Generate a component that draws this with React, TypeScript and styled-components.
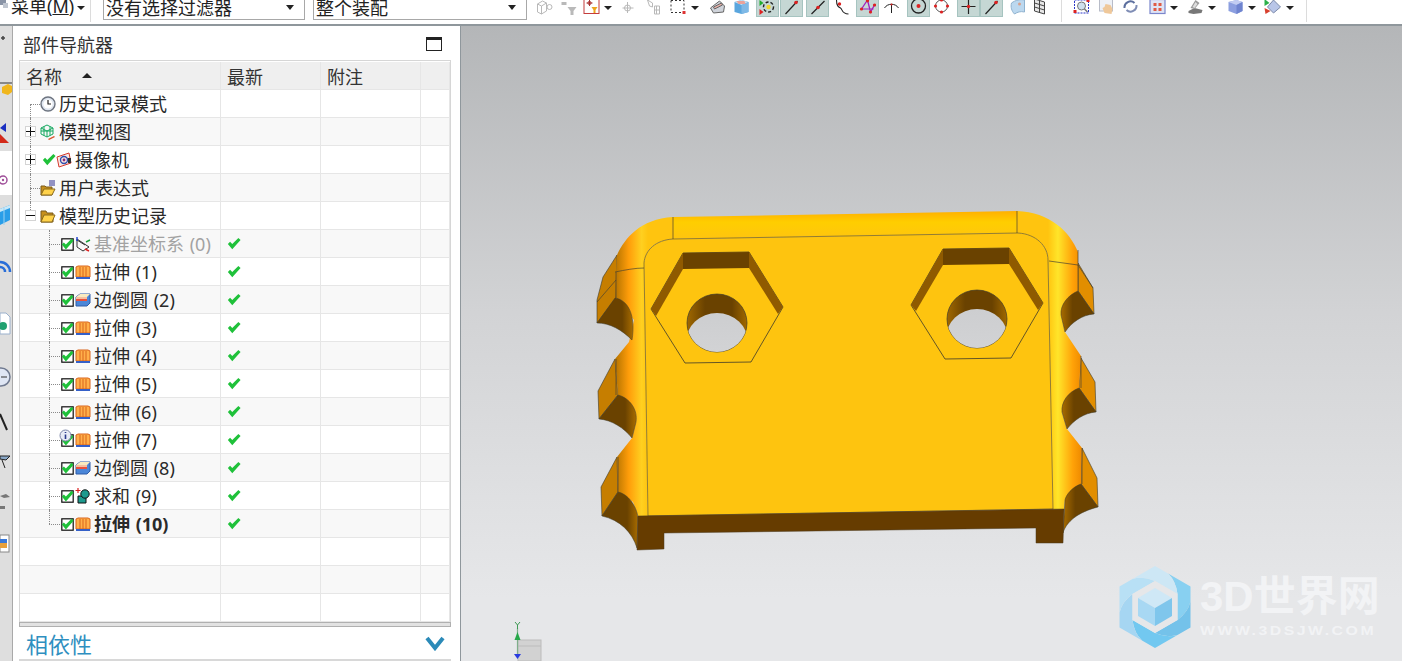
import React from 'react';
import styled, { createGlobalStyle } from 'styled-components';

const UI_FONT = '"Noto Sans", "Noto Sans CJK SC", sans-serif';

const GlobalStyle = createGlobalStyle`
  html, body {
    margin: 0;
    width: 1402px;
    height: 661px;
    overflow: hidden;
    background: #fff;
    font-family: ${UI_FONT};
  }
`;

const Page = styled.div`
  width: 1402px;
  height: 661px;
  display: flex;
  flex-direction: column;
  overflow: hidden;
`;

const Toolbar = styled.div`
  flex: 0 0 26px;
  box-sizing: border-box;
  display: flex;
  align-items: flex-start;
  overflow: hidden;
  background: #fff;
  border-bottom: 2px solid #8f979c;
`;

const MenuLabel = styled.span`
  margin: -5px 0 0 2px;
  font-size: 18px;
  line-height: 22px;
  color: #222;
  white-space: nowrap;
  width: 62px;
`;

const Caret = styled.i<{ $ml: number }>`
  flex: none;
  margin: 6px 0 0 ${(p) => p.$ml}px;
  border-left: 4px solid transparent;
  border-right: 4px solid transparent;
  border-top: 4px solid #222;
`;

const ToolSep = styled.i<{ $ml: number }>`
  flex: none;
  width: 1px;
  height: 22px;
  margin-left: ${(p) => p.$ml}px;
  background: #dcdcdc;
`;

const Combo = styled.div<{ $w: number; $ml: number }>`
  flex: none;
  box-sizing: border-box;
  width: ${(p) => p.$w}px;
  height: 20px;
  margin-left: ${(p) => p.$ml}px;
  padding: 0 10px 0 2px;
  display: flex;
  align-items: flex-end;
  justify-content: space-between;
  border: 1px solid #a8a8a8;
  border-top: 0;
  font-size: 18px;
  line-height: 21px;
  color: #222;
  white-space: nowrap;

  &::after {
    content: '';
    margin-bottom: 9px;
    border-left: 4px solid transparent;
    border-right: 4px solid transparent;
    border-top: 5px solid #222;
  }
`;

const Tool = styled.div<{ $w: number; $ml: number; $on?: boolean }>`
  flex: none;
  box-sizing: border-box;
  width: ${(p) => p.$w}px;
  height: 17px;
  margin-left: ${(p) => p.$ml}px;
  display: flex;
  align-items: flex-start;
  justify-content: center;
  background: ${(p) => (p.$on ? '#c5d7d4' : 'transparent')};
  border: ${(p) => (p.$on ? '1px solid #a6c4c0' : '0')};
  border-top: 0;

  svg {
    width: 17px;
    height: 16px;
    flex: none;
    margin-top: -1px;
  }
`;

const Main = styled.div`
  flex: 1;
  min-height: 0;
  display: flex;
`;

const Rail = styled.div`
  flex: 0 0 13px;
  box-sizing: border-box;
  display: flex;
  flex-direction: column;
  background: #dedede;
  border-right: 1px solid #a9a9a9;
  overflow: hidden;
`;

const RailGap = styled.div`
  flex: none;
  height: 44px;
  margin-top: 7px;
  background: #fff;
`;

const RailIcon = styled.svg<{ $mt: number }>`
  flex: none;
  width: 12px;
  height: 24px;
  margin-top: ${(p) => p.$mt}px;
`;

const Navigator = styled.section`
  flex: 0 0 448px;
  box-sizing: border-box;
  padding: 0 9px 0 6px;
  display: flex;
  flex-direction: column;
  background: #fff;
  border-right: 1px solid #8f979c;
`;

const NavHeader = styled.header`
  flex: 0 0 34px;
  box-sizing: border-box;
  padding: 2px 9px 0 4px;
  display: flex;
  align-items: center;
  justify-content: space-between;
  font-size: 18px;
  color: #333;
`;

const MaxButton = styled.i`
  width: 16px;
  height: 14px;
  box-sizing: border-box;
  border: 1px solid #222;
  border-top-width: 3px;
`;

const Table = styled.div`
  flex: 0 0 562px;
  box-sizing: border-box;
  border: 1px solid #d6d6d6;
  border-bottom: 0;
  padding-top: 1px;
`;

const Row = styled.div<{ $head?: boolean; $alt?: boolean }>`
  display: grid;
  grid-template-columns: 201px 100px 100px 1fr;
  height: 28px;
  box-sizing: border-box;
  background: ${(p) => (p.$head ? '#efefef' : p.$alt ? '#f8f8f8' : '#fff')};
  border-bottom: 1px solid #e6e6e6;
`;

const Cell = styled.div`
  position: relative;
  display: flex;
  align-items: center;
  padding-left: 6px;
  border-right: 1px solid #e6e6e6;
  font-size: 18px;
  color: #333;
  white-space: nowrap;
  min-width: 0;
`;

const SortArrow = styled.i`
  margin-left: 20px;
  border-left: 5px solid transparent;
  border-right: 5px solid transparent;
  border-bottom: 5px solid #222;
`;

const TreeCell = styled(Cell)<{ $indent: number }>`
  padding-left: ${(p) => p.$indent}px;
`;

const RowLabel = styled.span<{ $muted?: boolean; $bold?: boolean }>`
  margin: 0 0 2px 3px;
  word-spacing: 1px;
  color: ${(p) => (p.$muted ? '#a2a2a2' : '#2a2a2a')};
  font-weight: ${(p) => (p.$bold ? 700 : 400)};
`;

const GuideV = styled.i<{ $left: number; $top: number; $bottom: number }>`
  position: absolute;
  left: ${(p) => p.$left}px;
  top: ${(p) => p.$top}px;
  bottom: ${(p) => p.$bottom}px;
  border-left: 1px dotted #8a8a8a;
`;

const GuideH = styled.i<{ $left: number; $width: number }>`
  position: absolute;
  left: ${(p) => p.$left}px;
  width: ${(p) => p.$width}px;
  top: 14px;
  border-top: 1px dotted #8a8a8a;
`;

const Expander = styled.i`
  position: absolute;
  left: 5px;
  top: 8px;
  z-index: 1;
  width: 11px;
  height: 11px;
  box-sizing: border-box;
  border: 1px solid #d4d4d4;
  background: #fff;
  display: flex;
  align-items: center;
  justify-content: center;
  font-style: normal;

  svg {
    width: 9px;
    height: 9px;
  }
`;

const RowIcon = styled.svg<{ $size?: number; $mr?: number }>`
  flex: none;
  width: ${(p) => p.$size ?? 16}px;
  height: ${(p) => p.$size ?? 16}px;
  margin-right: ${(p) => p.$mr ?? 0}px;
`;

const InfoBadge = styled.svg`
  position: absolute;
  left: 39px;
  top: 3px;
  width: 13px;
  height: 13px;
`;

const ScrollTrack = styled.div`
  flex: 0 0 5px;
  box-sizing: border-box;
  background: #e2e2e2;
  border: 1px solid #b0b0b0;
`;

const Dependency = styled.div`
  flex: 0 0 30px;
  box-sizing: border-box;
  padding: 0 6px 0 7px;
  display: flex;
  align-items: center;
  justify-content: space-between;
  font-size: 22px;
  color: #2f8fc0;
  border-bottom: 2px solid #d8d8d8;
`;

const Viewport = styled.main`
  flex: 1;
  position: relative;
  overflow: hidden;
  background: linear-gradient(#b4b6b8 0%, #d2d3d5 45%, #e6e7e9 90%);
`;

const ModelCanvas = styled.svg`
  display: block;
  width: 941px;
  height: 635px;
`;

const Watermark = styled.div`
  position: absolute;
  left: 658px;
  top: 540px;
  display: flex;
  gap: 9px;
`;

const WatermarkLogo = styled.svg`
  flex: none;
  width: 72px;
  height: 82px;
`;

const WatermarkText = styled.div`
  display: flex;
  flex-direction: column;
  padding-top: 8px;
  color: #f2f3f5;
`;

const WatermarkTitle = styled.span`
  font-family: "Liberation Sans", "Noto Sans CJK SC", sans-serif;
  font-size: 42px;
  line-height: 46px;
  font-weight: 700;
  white-space: nowrap;
`;

const WatermarkUrl = styled.span`
  font-family: "Liberation Sans", sans-serif;
  font-size: 13px;
  line-height: 16px;
  margin-top: 3px;
  font-weight: 700;
  letter-spacing: 2.05px;
  transform: scaleX(1.22);
  transform-origin: left;
  white-space: nowrap;
`;

const G = '#b9b9b9';

// toolbar glyphs, all on a 16 grid
const toolGlyphs: Record<string, React.ReactNode> = {
  boxes: (
    <g fill="none" stroke={G}>
      <path d="M1 5l5-3 4 2v8l-5 3-4-2zM1 5l4 2v8M5 7l5-3" />
      <circle cx="13" cy="8" r="2.5" />
    </g>
  ),
  funnel: (
    <g fill={G}>
      <path d="M1 3h5v3H1z" />
      <path d="M7 8h9l-3 4v4h-3v-4z" />
    </g>
  ),
  redbox: (
    <g>
      <rect x="0.5" y="0.5" width="15" height="14" fill="#fff" stroke="#c43c3c" />
      <path d="M6 1v6M3 4h6" stroke="#a33" />
      <circle cx="6" cy="4" r="1.6" fill="none" stroke="#a33" />
      <path d="M8 8h6l-2 3v3h-2v-3z" fill="#eea51e" />
    </g>
  ),
  target: (
    <g fill="none" stroke={G}>
      <path d="M7 3v11M2 9h11" />
      <circle cx="7" cy="9" r="3" />
    </g>
  ),
  sheets: (
    <g fill="none" stroke={G}>
      <path d="M2 1l5 3v4l-3-1zM9 7h5v8H9z" />
      <path d="M11 7v8M9 11h5" />
    </g>
  ),
  dashed: (
    <g>
      <rect x="1.5" y="1.5" width="13" height="12" fill="none" stroke="#333" strokeDasharray="2 2" />
      <rect x="13" y="12" width="3" height="3" fill="#d33" />
    </g>
  ),
  scanner: (
    <g stroke="#666">
      <path d="M1 9l9-7 5 5-1 6-10 1z" fill="#cfd3da" />
      <path d="M4 8l8-4 1 2-8 4z" fill="#e7b0a8" />
    </g>
  ),
  cubeBlue: (
    <g>
      <path d="M1 3l7-2 7 2v10l-7 2-7-2z" fill="#5aa6de" />
      <path d="M1 3l7-2 7 2-7 3z" fill="#c9e2f2" />
      <path d="M8 6l7-3v10l-7 2z" fill="#7fb9e6" />
      <path d="M3 2h8l1 3H5z" fill="#e9a29a" />
    </g>
  ),
  snap: (
    <g>
      <circle cx="9" cy="8" r="5" fill="none" stroke="#222" strokeDasharray="3 2" strokeWidth="1.4" />
      <circle cx="9" cy="8" r="2.2" fill="#f4d62c" />
      <path d="M0 1l4 3-4 3z" fill="#1fae2c" />
      <path d="M0 10l4 3-4 3z" fill="#d22" />
    </g>
  ),
  lineEnd: (
    <g>
      <path d="M2 15L14 2" stroke="#222" strokeWidth="1.2" />
      <circle cx="12.5" cy="3.5" r="1.8" fill="#d22" />
    </g>
  ),
  lineMid: (
    <g>
      <path d="M2 15L15 2" stroke="#222" strokeWidth="1.2" />
      <circle cx="8.5" cy="8.5" r="1.8" fill="#d22" />
    </g>
  ),
  curve: (
    <g>
      <path d="M2 1c0 6 2 7 4 8s1 6 8 6" fill="none" stroke="#222" strokeWidth="1.1" />
      <circle cx="5" cy="5" r="1.7" fill="#d22" />
    </g>
  ),
  polyPink: (
    <g>
      <path d="M2 10L8 1l3 12 4-7" fill="none" stroke="#a020c0" strokeWidth="1.3" />
      <path d="M2 10h12" fill="none" stroke="#a020c0" />
      <g fill="#d22">
        <circle cx="2" cy="10" r="1.6" />
        <circle cx="8" cy="1.8" r="1.6" />
        <circle cx="11" cy="13" r="1.6" />
        <circle cx="15" cy="6" r="1.6" />
      </g>
    </g>
  ),
  arcTick: (
    <g fill="none" stroke="#222">
      <path d="M1 9c3-5 11-5 14 0M8 5v9" />
      <circle cx="8" cy="5.5" r="1" fill="#d22" stroke="none" />
    </g>
  ),
  ringCenter: (
    <g>
      <circle cx="8" cy="7" r="7" fill="none" stroke="#222" strokeWidth="1.3" />
      <circle cx="8" cy="7" r="2" fill="#d22" />
    </g>
  ),
  ringPoints: (
    <g>
      <circle cx="8" cy="7" r="6" fill="none" stroke="#555" />
      <g fill="#d22">
        <circle cx="8" cy="1" r="1.6" />
        <circle cx="2" cy="7" r="1.6" />
        <circle cx="14" cy="7" r="1.6" />
        <circle cx="8" cy="13" r="1.6" />
      </g>
    </g>
  ),
  cross: (
    <g>
      <path d="M8 0v15M1 7.5h14" stroke="#222" strokeWidth="1.2" />
      <circle cx="8" cy="7.5" r="1.7" fill="#d22" />
    </g>
  ),
  patch: (
    <g>
      <path d="M2 4c4-3 9-4 13-3v12c-4-1-7 0-10 2-3-3-4-7-3-11z" fill="#bcd8ef" stroke="#8fb2cf" />
      <circle cx="10" cy="5" r="1.5" fill="#d8a08c" />
    </g>
  ),
  grid: (
    <g fill="none" stroke="#444">
      <path d="M2 0l10 3v12L2 12z" fill="#e8e8e8" />
      <path d="M2 4l10 3M2 8l10 3M7 2v11" />
    </g>
  ),
  zoomBox: (
    <g>
      <rect x="1" y="1" width="14" height="13" fill="#fff" stroke="#2a36c8" strokeDasharray="2 1" />
      <circle cx="8" cy="7" r="4" fill="#cfe0ee" stroke="#777" />
      <path d="M11 10l3 3" stroke="#777" strokeWidth="1.5" />
      <rect x="13" y="0" width="3" height="3" fill="#d22" />
      <rect x="0" y="11" width="3" height="3" fill="#d22" />
    </g>
  ),
  hand: (
    <g>
      <rect x="1" y="0" width="13" height="12" fill="#eef1f6" stroke="#b8bcc8" />
      <path d="M6 14l-2-5 2-1 1-3 5 1 2 4-1 5z" fill="#efc89a" />
    </g>
  ),
  rotate: (
    <g fill="none" strokeWidth="2">
      <path d="M2 9a6 6 0 0 1 10-5" stroke="#5c6f9e" />
      <path d="M14 6a6 6 0 0 1-10 5" stroke="#7f8db5" />
    </g>
  ),
  layout: (
    <g>
      <rect x="0.5" y="0.5" width="15" height="14" fill="#dfe4f5" stroke="#7b86cc" strokeWidth="1.2" />
      <g fill="#e05a44">
        <rect x="4" y="4" width="3" height="3" />
        <rect x="9" y="4" width="3" height="3" />
        <rect x="4" y="9" width="3" height="3" />
        <rect x="9" y="9" width="3" height="3" />
      </g>
    </g>
  ),
  shade: (
    <g>
      <path d="M1 12l6-3 8 2-1 3-8 1-5-1z" fill="#777" />
      <path d="M3 9l5-8 4 3-5 6z" fill="#9a9a9a" />
      <path d="M5 8l3-5 2 2-3 4z" fill="#ddd" />
    </g>
  ),
  cubeLav: (
    <g>
      <path d="M1 3l8-2 6 2v9l-6 3-8-3z" fill="#8c9fe0" />
      <path d="M1 3l8-2 6 2-6 3z" fill="#c2cdf2" />
      <path d="M9 6l6-3v9l-6 3z" fill="#6f84cf" />
    </g>
  ),
  diamond: (
    <g>
      <path d="M9 1l7 7-7 6-6-6z" fill="#b9c6e8" stroke="#7b88a8" />
      <path d="M0 0l5 4-5 3z" fill="#2bb04a" />
      <path d="M0 9l6 3-5 3z" fill="#d8402e" />
    </g>
  ),
};

type ToolItem =
  | { kind: 'tool'; glyph: string; w: number; ml: number; on?: boolean }
  | { kind: 'caret'; ml: number }
  | { kind: 'sep'; ml: number };

const t = (glyph: string, ml: number, on?: boolean): ToolItem => ({ kind: 'tool', glyph, w: on ? 23 : 17, ml, on });

const tools: ToolItem[] = [
  t('boxes', 9),
  t('funnel', 7),
  t('redbox', 6),
  { kind: 'caret', ml: 4 },
  t('target', 8),
  t('sheets', 8),
  t('dashed', 7),
  { kind: 'caret', ml: 5 },
  t('scanner', 10),
  t('cubeBlue', 7),
  t('snap', 6, true),
  t('lineEnd', 1, true),
  t('lineMid', 3, true),
  t('curve', 5),
  t('polyPink', 5, true),
  t('arcTick', 4),
  t('ringCenter', 7, true),
  t('ringPoints', 3),
  t('cross', 7, true),
  t('lineEnd', 0, true),
  t('patch', 6),
  t('grid', 6),
  { kind: 'sep', ml: 12 },
  t('zoomBox', 11),
  t('hand', 8),
  t('rotate', 7),
  t('layout', 10),
  { kind: 'caret', ml: 4 },
  t('shade', 9),
  { kind: 'caret', ml: 4 },
  t('cubeLav', 11),
  { kind: 'caret', ml: 4 },
  t('diamond', 8),
  { kind: 'caret', ml: 5 },
  { kind: 'sep', ml: 12 },
];

const CheckPath = () => <path d="M1 8l2.500-2.500 2.500 2.500 7-7 2.500 2.500-9.500 10.500z" fill="#1fc13a" />;

const Clock = () => (
  <RowIcon viewBox="0 0 16 16">
    <circle cx="8" cy="8" r="7" fill="#dfe6f0" stroke="#6d7480" strokeWidth="1.4" />
    <circle cx="8" cy="8" r="4.6" fill="#fff" />
    <path d="M8 4v4h3" fill="none" stroke="#222" strokeWidth="1.2" />
  </RowIcon>
);

const ViewCube = () => (
  <RowIcon viewBox="0 0 16 16">
    <path d="M7 1l6 3v6l-6 3-6-3V4zM1 4l6 3 6-3M7 7v6M4 2.500v9M10 2.500v9M1 7l12 0" fill="none" stroke="#16a860" strokeWidth="1" />
    <path d="M8 15l6-3 1 1-6 3z" fill="#d8532c" />
  </RowIcon>
);

const Camera = () => (
  <RowIcon viewBox="0 0 16 16">
    <path d="M1 5l12-4 2 10-12 4z" fill="#fbe8e4" stroke="#d43a2e" />
    <circle cx="8" cy="8" r="3.500" fill="none" stroke="#304fae" strokeWidth="1.4" />
    <circle cx="8" cy="8" r="1.400" fill="#8b2a7a" />
    <rect x="12" y="6" width="3" height="5" fill="#333" />
  </RowIcon>
);

const Folder = () => (
  <RowIcon viewBox="0 0 16 16">
    <path d="M1 3h5l1 2h6v9H1z" fill="#c7901c" stroke="#7a5a1c" />
    <path d="M1 14l3-7h11l-3 7z" fill="#ffd24a" stroke="#8a6a1c" />
  </RowIcon>
);

const FolderExpr = () => (
  <RowIcon viewBox="0 0 16 16">
    <path d="M1 6h4l1 1h6v8H1z" fill="#c7901c" stroke="#7a5a1c" />
    <path d="M1 15l3-6h11l-3 6z" fill="#ffd24a" stroke="#8a6a1c" />
    <path d="M9 1h6M9 3h6M9 5h6" stroke="#2a2a8c" />
  </RowIcon>
);

const CheckBox = () => (
  <RowIcon $size={13} $mr={1} viewBox="0 0 16 16">
    <rect x="1" y="1" width="14" height="14" fill="#fff" stroke="#111" strokeWidth="1.500" />
    <CheckPath />
  </RowIcon>
);

const Csys = () => (
  <RowIcon viewBox="0 0 16 16">
    <path d="M2 3v8l6 4 6-4-6-4z" fill="none" stroke="#333" />
    <path d="M2 4l8 5" stroke="#333" />
    <path d="M2 1v4" stroke="#1a3fd0" strokeWidth="1.400" />
    <path d="M11 6l4-2" stroke="#18a038" strokeWidth="1.400" />
    <path d="M10 13l4 2" stroke="#d22" strokeWidth="1.400" />
  </RowIcon>
);

const Extrude = () => (
  <RowIcon viewBox="0 0 16 16">
    <path d="M1 3l2-1h10l2 1v10H1z" fill="#ffb04a" stroke="#d9641c" />
    <path d="M5 3v10M8 3v10M11 3v10" stroke="#d9641c" />
    <path d="M1 13h14v2H1z" fill="#3560c8" />
  </RowIcon>
);

const Blend = () => (
  <RowIcon viewBox="0 0 16 16">
    <path d="M1 5l4-3h10v9l-3 3H1z" fill="#4a86d8" stroke="#2f5da8" />
    <path d="M1 5l4-3h10l-3 3z" fill="#f8eac0" />
    <path d="M1 5h11v4H1z" fill="#f5c0a0" />
    <path d="M1 7h11v2H1z" fill="#e8503c" />
  </RowIcon>
);

const Unite = () => (
  <RowIcon viewBox="0 0 16 16">
    <path d="M3 8h8v7H3z" fill="#1d9a8e" stroke="#111" />
    <circle cx="10" cy="6" r="4.200" fill="#1d9a8e" stroke="#111" />
    <path d="M3 0v5M0.500 2.500h5" stroke="#d22" strokeWidth="1.200" />
  </RowIcon>
);

const Tick = () => (
  <RowIcon $size={14} viewBox="0 0 16 16">
    <CheckPath />
  </RowIcon>
);

const featureIcons: Record<string, React.ReactNode> = {
  csys: <Csys />,
  extrude: <Extrude />,
  blend: <Blend />,
  unite: <Unite />,
};

const topRows = [
  { label: '历史记录模式', icon: <Clock />, indent: 20, guide: [14, 0], stub: true },
  { label: '模型视图', icon: <ViewCube />, indent: 20, guide: [0, 0], expand: '+' },
  { label: '摄像机', icon: <Camera />, indent: 22, guide: [0, 0], expand: '+', check: true },
  { label: '用户表达式', icon: <FolderExpr />, indent: 20, guide: [0, 0], stub: true },
  { label: '模型历史记录', icon: <Folder />, indent: 20, guide: [0, 14], expand: '-' },
];

const features = [
  { label: '基准坐标系 (0)', icon: 'csys', muted: true },
  { label: '拉伸 (1)', icon: 'extrude' },
  { label: '边倒圆 (2)', icon: 'blend' },
  { label: '拉伸 (3)', icon: 'extrude' },
  { label: '拉伸 (4)', icon: 'extrude' },
  { label: '拉伸 (5)', icon: 'extrude' },
  { label: '拉伸 (6)', icon: 'extrude' },
  { label: '拉伸 (7)', icon: 'extrude', info: true },
  { label: '边倒圆 (8)', icon: 'blend' },
  { label: '求和 (9)', icon: 'unite' },
  { label: '拉伸 (10)', icon: 'extrude', bold: true },
];

const EmptyCells = () => (
  <>
    <Cell />
    <Cell />
  </>
);

const Navigation = () => (
  <Navigator>
    <NavHeader>
      部件导航器
      <MaxButton />
    </NavHeader>
    <Table>
      <Row $head>
        <Cell>
          名称
          <SortArrow />
        </Cell>
        <Cell>最新</Cell>
        <Cell>附注</Cell>
        <Cell />
      </Row>
      {topRows.map((row, i) => (
        <Row key={row.label} $alt={i % 2 === 1}>
          <TreeCell $indent={row.indent}>
            <GuideV $left={10} $top={row.guide[0]} $bottom={row.guide[1]} />
            {row.stub && <GuideH $left={10} $width={10} />}
            {row.expand && (
              <Expander>
                <svg viewBox="0 0 9 9">
                  <path d={row.expand === '+' ? 'M0 4.500h9M4.500 0v9' : 'M0 4.500h9'} stroke="#111" />
                </svg>
              </Expander>
            )}
            {row.check && <Tick />}
            {row.icon}
            <RowLabel>{row.label}</RowLabel>
          </TreeCell>
          <Cell />
          <EmptyCells />
        </Row>
      ))}
      {features.map((row, i) => (
        <Row key={row.label} $alt={i % 2 === 0}>
          <TreeCell $indent={41}>
            <GuideV $left={29} $top={0} $bottom={i === features.length - 1 ? 14 : 0} />
            <GuideH $left={29} $width={11} />
            <CheckBox />
            {row.info && (
              <InfoBadge viewBox="0 0 13 13">
                <circle cx="6.500" cy="6.500" r="5.500" fill="#e8ecf6" stroke="#7d86a8" />
                <path d="M6.500 3v1M6.500 5.500V10" stroke="#2a3a8c" strokeWidth="1.600" />
              </InfoBadge>
            )}
            {featureIcons[row.icon]}
            <RowLabel $muted={row.muted} $bold={row.bold}>
              {row.label}
            </RowLabel>
          </TreeCell>
          <Cell>
            <Tick />
          </Cell>
          <EmptyCells />
        </Row>
      ))}
      {[0, 1, 2].map((i) => (
        <Row key={i} $alt={i === 1}>
          <Cell />
          <Cell />
          <EmptyCells />
        </Row>
      ))}
    </Table>
    <ScrollTrack />
    <Dependency>
      相依性
      <svg width="20" height="15" viewBox="0 0 20 15">
        <path d="M2 2l8 10 8-10" fill="none" stroke="#2b8ab8" strokeWidth="4" />
      </svg>
    </Dependency>
  </Navigator>
);

const HEDGE = '#3d3a2c';

// page coordinates, the canvas viewBox starts where the viewport starts
const Model = () => (
  <ModelCanvas viewBox="461 26 941 635">
    <defs>
      <linearGradient id="foldLeft" gradientUnits="userSpaceOnUse" x1="616" x2="648" y1="0" y2="0">
        <stop offset="0" stopColor="#b87500" />
        <stop offset="0.4" stopColor="#ff9d0a" />
        <stop offset="0.8" stopColor="#ffd020" />
        <stop offset="1" stopColor="#ffc40f" />
      </linearGradient>
      <linearGradient id="foldRight" gradientUnits="userSpaceOnUse" x1="1048" x2="1081" y1="0" y2="0">
        <stop offset="0" stopColor="#ffc40f" />
        <stop offset="0.3" stopColor="#ffe52a" />
        <stop offset="0.75" stopColor="#ffa208" />
        <stop offset="1" stopColor="#f08c00" />
      </linearGradient>
      <linearGradient id="foldTop" x1="0" x2="0" y1="0" y2="1">
        <stop offset="0" stopColor="#ffb000" />
        <stop offset="0.4" stopColor="#ffce00" />
        <stop offset="1" stopColor="#ffc40f" />
      </linearGradient>
      <linearGradient id="notch" x1="0" x2="1" y1="0" y2="0">
        <stop offset="0" stopColor="#6a4200" />
        <stop offset="0.7" stopColor="#6a4200" />
        <stop offset="1" stopColor="#a86c00" />
      </linearGradient>
      <linearGradient id="notchR" x1="0" x2="1" y1="0" y2="0">
        <stop offset="0" stopColor="#a86c00" />
        <stop offset="0.35" stopColor="#6a4200" />
        <stop offset="1" stopColor="#6a4200" />
      </linearGradient>
      <linearGradient id="holeWall" x1="0" x2="1" y1="0" y2="0">
        <stop offset="0" stopColor="#a06800" />
        <stop offset="0.3" stopColor="#6a4200" />
        <stop offset="0.75" stopColor="#6a4200" />
        <stop offset="1" stopColor="#a06800" />
      </linearGradient>
      <linearGradient id="holeBg" x1="0" x2="0" y1="0" y2="1">
        <stop offset="0" stopColor="#cdced0" />
        <stop offset="1" stopColor="#d4d5d7" />
      </linearGradient>
      <clipPath id="hole1">
        <ellipse cx="717" cy="323" rx="30" ry="29" />
      </clipPath>
      <clipPath id="hole2">
        <ellipse cx="977" cy="319" rx="30" ry="29" />
      </clipPath>
    </defs>

    {/* left flange pieces */}
    <path d="M597 323V300L603 277 617 255 616 298Z" fill="#c67e00" stroke={HEDGE} strokeWidth="0.6" />
    <path d="M599 419L598 391 615 359 618 395Z" fill="#c67e00" stroke={HEDGE} strokeWidth="0.6" />
    <path d="M602 516L601 487 617 457 618 492Z" fill="#c67e00" stroke={HEDGE} strokeWidth="0.6" />
    {/* right flange pieces */}
    <path d="M1094 314L1093 288 1078 263 1078 291Z" fill="#e28e00" stroke={HEDGE} strokeWidth="0.6" />
    <path d="M1096 412L1095 382 1081 358 1079 388Z" fill="#e28e00" stroke={HEDGE} strokeWidth="0.6" />
    <path d="M1098 507L1097 478 1082 448 1081 484Z" fill="#e28e00" stroke={HEDGE} strokeWidth="0.6" />

    {/* bent sides */}
    <path
      d="M644 263L648 516H638L633 502 618 492 617 457 632 438 636 420 618 395 615 359 629 342 634 320 616 298 616 272 617 255C625 238 640 219 673 217V239C655 240 645 250 644 263Z"
      fill="url(#foldLeft)"
    />
    <path
      d="M1048 260L1053 509H1064L1065 500 1081 484 1082 448 1067 429 1062 412 1079 388 1081 356 1065 332 1061 313 1078 291 1078 252C1070 232 1050 212 1017 211V233C1035 234 1048 245 1048 260Z"
      fill="url(#foldRight)"
    />
    <path d="M673 217L1017 211V233L673 239Z" fill="url(#foldTop)" />

    {/* flat plate */}
    <path d="M673 239L1018 233C1036 234 1048 246 1048 260L1053 509 648 516 644 263C645 250 656 240 673 239Z" fill="#fec40f" stroke="#7a6a30" strokeWidth="0.8" />

    {/* notches */}
    <path d="M597 323L615 298C628 300 636 315 632 340 622 330 610 323 597 323Z" fill="url(#notch)" stroke={HEDGE} strokeWidth="0.5" />
    <path d="M599 419L618 395C630 398 638 410 636 422L632 438C624 428 612 420 599 419Z" fill="url(#notch)" stroke={HEDGE} strokeWidth="0.5" />
    <path d="M1094 314L1078 291C1068 295 1060 305 1061 315L1065 332C1072 322 1082 315 1094 314Z" fill="url(#notchR)" stroke={HEDGE} strokeWidth="0.5" />
    <path d="M1096 412L1079 388C1068 392 1061 402 1062 412L1067 429C1074 420 1084 413 1096 412Z" fill="url(#notchR)" stroke={HEDGE} strokeWidth="0.5" />
    <path d="M602 516L618 492C628 494 636 505 638 517L637 548C632 532 620 520 602 516Z" fill="url(#notch)" stroke={HEDGE} strokeWidth="0.5" />
    <path d="M1098 507L1081 484C1072 487 1066 495 1065 500L1063 533C1066 522 1078 512 1098 507Z" fill="url(#notchR)" stroke={HEDGE} strokeWidth="0.5" />

    {/* front wall with the two feet */}
    <path d="M638 516L1064 509 1063 543H1036V528L664 533V549L637 550Z" fill="#663c00" stroke="#4a3a20" strokeWidth="0.5" />

    {/* pockets */}
    <path d="M683 253L749 252 783 307 751 362 685 363 651 309Z" fill="#fec40f" stroke={HEDGE} strokeWidth="0.8" />
    <path d="M683 253L749 252 749 268 683 269Z" fill="#6a4200" />
    <path d="M683 253L683 269 656 316 651 309Z" fill="#8f5a00" />
    <path d="M749 252L783 307 778 314 749 268Z" fill="#8f5a00" />
    <path d="M943 249L1009 248 1043 303 1011 358 945 359 911 305Z" fill="#fec40f" stroke={HEDGE} strokeWidth="0.8" />
    <path d="M943 249L1009 248 1009 264 943 265Z" fill="#6a4200" />
    <path d="M943 249L943 265 916 311 911 305Z" fill="#8f5a00" />
    <path d="M1009 248L1043 303 1038 310 1009 264Z" fill="#8f5a00" />

    {/* bores */}
    <ellipse cx="717" cy="323" rx="30" ry="29" fill="url(#holeWall)" stroke={HEDGE} strokeWidth="0.7" />
    <ellipse cx="717" cy="342" rx="31" ry="29" fill="url(#holeBg)" clipPath="url(#hole1)" />
    <ellipse cx="977" cy="319" rx="30" ry="29" fill="url(#holeWall)" stroke={HEDGE} strokeWidth="0.7" />
    <ellipse cx="977" cy="338" rx="31" ry="29" fill="url(#holeBg)" clipPath="url(#hole2)" />

    {/* edges */}
    <g fill="none" stroke="#4a4430" strokeWidth="0.7">
      <path d="M673 217V239M1017 211V233" />
      <path d="M615 272C625 270 635 268 644 268M616 272V298M597 302L616 280" />
      <path d="M1049 261L1078 265M1078 250V291M1078 265L1093 288" />
      <path d="M616 359V395M618 457V492M1081 356V388M1082 448V484" />
    </g>

    {/* triad */}
    <rect x="518" y="640" width="23" height="21" fill="#d2d2d2" stroke="#bcbcbc" />
    <path d="M518 646h23" stroke="#bcbcbc" />
    <path d="M517.500 628V655" stroke="#7fae8a" strokeWidth="1.200" />
    <path d="M517.500 632l3 8h-6z" fill="#27a84a" />
    <path d="M515 622l2.500 3 2.500-3M517.500 625v4" fill="none" stroke="#3f9a55" />
    <path d="M514 654h7l-3.500 5z" fill="#2a3ce0" />
  </ModelCanvas>
);

const petalColors = ['#88d0f1', '#74c2ea', '#72c8f0', '#a6d6f2', '#b8e0f5', '#cde7f5'];

const WatermarkMark = () => (
  <WatermarkLogo viewBox="0 0 72 82">
    {petalColors.map((color, i) => (
      <path
        key={color}
        d="M49 7.500L71.500 20.500V35.500Q69 46 58.500 54V28Q57 15 49 7.500Z"
        fill={color}
        transform={`rotate(${i * 60} 36 41)`}
      />
    ))}
    <path d="M36 15L58.500 28V54L36 67 13.500 54V28Z" fill="#e6e7e9" />
    <path d="M36 22L53 32 36 42 19 32Z" fill="#cfe8f6" />
    <path d="M19 32L36 42V60L19 50Z" fill="#a8d8f3" />
    <path d="M53 32L36 42V60L53 50Z" fill="#7fc6ec" />
  </WatermarkLogo>
);

const App = () => (
  <Page>
    <GlobalStyle />
    <Toolbar>
      <svg width="9" height="16" viewBox="0 0 9 16" style={{ flex: 'none' }}>
        <rect x="0" y="0" width="6" height="5" fill="#8a94a6" />
        <rect x="3" y="3" width="5" height="5" fill="#c0c6d0" />
      </svg>
      <MenuLabel>
        菜单(<u>M</u>)
      </MenuLabel>
      <Caret $ml={4} />
      <ToolSep $ml={5} />
      <Combo $w={202} $ml={12}>
        没有选择过滤器
      </Combo>
      <Combo $w={214} $ml={8}>
        整个装配
      </Combo>
      {tools.map((item, i) => {
        if (item.kind === 'caret') return <Caret key={i} $ml={item.ml} />;
        if (item.kind === 'sep') return <ToolSep key={i} $ml={item.ml} />;
        return (
          <Tool key={i} $w={item.w} $ml={item.ml} $on={item.on}>
            <svg viewBox="0 0 16 16">{toolGlyphs[item.glyph]}</svg>
          </Tool>
        );
      })}
    </Toolbar>
    <Main>
      <Rail>
        <RailIcon $mt={0} viewBox="0 0 12 24">
          <path d="M1 12h4M3 10v4" stroke="#444" strokeWidth="1.500" />
        </RailIcon>
        <RailIcon $mt={29} viewBox="0 0 12 24">
          <path d="M2 8l6-3 4 2v6l-4 3-6-2z" fill="#f0b61c" />
          <path d="M0 4h12" stroke="#333" />
        </RailIcon>
        <RailIcon $mt={17} viewBox="0 0 12 24">
          <path d="M6 3v9L0 8z" fill="#1a2fc0" />
          <path d="M0 14l9 9H0z" fill="#d32a1a" />
        </RailIcon>
        <RailGap />
        <RailIcon $mt={-27} viewBox="0 0 12 24">
          <circle cx="3" cy="12" r="4" fill="none" stroke="#a0509a" strokeWidth="1.500" />
          <circle cx="3" cy="12" r="1.200" fill="#a0509a" />
        </RailIcon>
        <RailIcon $mt={11} viewBox="0 0 12 24">
          <path d="M0 6l10-4v15L0 22z" fill="#2a9ee8" />
          <path d="M0 6l10-4v3L0 9z" fill="#c8e8f8" />
          <path d="M4 5v17" stroke="#9ad2f2" />
        </RailIcon>
        <RailIcon $mt={30} viewBox="0 0 12 24">
          <path d="M0 5a10 10 0 0 1 10 10M0 10a5 5 0 0 1 5 5" fill="none" stroke="#2a6ed8" strokeWidth="2.500" />
        </RailIcon>
        <RailIcon $mt={31} viewBox="0 0 12 24">
          <path d="M0 1h6l4 4v17H0z" fill="#fff" stroke="#9ab0cc" />
          <circle cx="3" cy="14" r="4" fill="#20a070" />
        </RailIcon>
        <RailIcon $mt={29} viewBox="0 0 12 24">
          <circle cx="1" cy="12" r="9" fill="#dfe6f4" stroke="#707a90" strokeWidth="1.500" />
          <path d="M1 12h6" stroke="#333" />
        </RailIcon>
        <RailIcon $mt={19} viewBox="0 0 12 24">
          <path d="M0 6l7 16" stroke="#222" strokeWidth="2" />
        </RailIcon>
        <RailIcon $mt={20} viewBox="0 0 12 24">
          <path d="M0 4h10L6 8 0 7zM2 8l3 8" fill="#8aa8c8" stroke="#222" />
        </RailIcon>
        <RailIcon $mt={14} viewBox="0 0 12 24">
          <path d="M0 6l6-2 4 3-6 1zM0 16h5v3H0z" fill="#777" />
        </RailIcon>
        <RailIcon $mt={18} viewBox="0 0 12 24">
          <rect x="0" y="3" width="9" height="17" fill="#fff" stroke="#888" />
          <rect x="0" y="7" width="7" height="9" fill="#e8a03a" />
          <path d="M0 7h7v4H0z" fill="#3a78d8" />
        </RailIcon>
      </Rail>
      <Navigation />
      <Viewport>
        <Model />
        <Watermark>
          <WatermarkMark />
          <WatermarkText>
            <WatermarkTitle>3D世界网</WatermarkTitle>
            <WatermarkUrl>WWW.3DSJW.COM</WatermarkUrl>
          </WatermarkText>
        </Watermark>
      </Viewport>
    </Main>
  </Page>
);

export default App;
